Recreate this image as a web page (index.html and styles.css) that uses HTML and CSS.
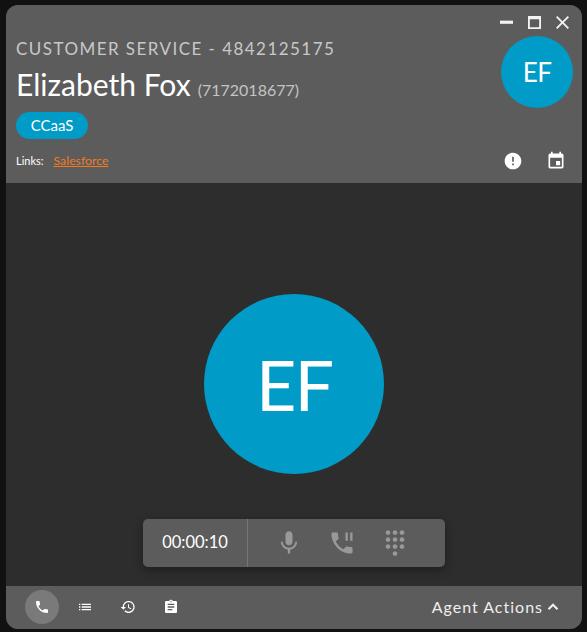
FILE: index.html
```html
<!DOCTYPE html>
<html lang="en">
<head>
    <meta charset="UTF-8">
    <meta name="viewport" content="width=device-width, initial-scale=1.0">
    <title>Call</title>
    <link rel="stylesheet" href="styles.css">
</head>
<body>
    <div class="window">
        <!-- Caller header -->
        <header class="header">
            <div class="info">
                <div class="queue">CUSTOMER SERVICE - 4842125175</div>
                <div class="caller">
                    <span class="caller-name">Elizabeth Fox</span>
                    <span class="caller-number">(7172018677)</span>
                </div>
                <span class="tag">CCaaS</span>
                <div class="links">
                    <span>Links:</span>
                    <a href="#">Salesforce</a>
                </div>
            </div>
            <div class="side">
                <div class="window-controls">
                    <svg class="control" viewBox="0 0 14 14"><rect x="0" y="5" width="14" height="3.4"/></svg>
                    <svg class="control" viewBox="0 0 14 14"><path fill-rule="evenodd" d="M0 0h14v14H0zM2 3.4V12h10V3.4z"/></svg>
                    <svg class="control" viewBox="5 5 14 14"><path d="M19 6.41L17.59 5 12 10.59 6.41 5 5 6.41 10.59 12 5 17.59 6.41 19 12 13.41 17.59 19 19 17.59 13.41 12z"/></svg>
                </div>
                <div class="avatar avatar-small">EF</div>
                <div class="header-actions">
                    <svg class="icon-20" viewBox="0 0 24 24"><path d="M12 2C6.48 2 2 6.48 2 12s4.48 10 10 10 10-4.48 10-10S17.52 2 12 2zm1 15h-2v-2h2v2zm0-4h-2V7h2v6z"/></svg>
                    <svg class="icon-20" viewBox="0 0 24 24"><path d="M17 12h-5v5h5v-5zM16 1v2H8V1H6v2H5c-1.11 0-1.99.9-1.99 2L3 19c0 1.1.89 2 2 2h14c1.1 0 2-.9 2-2V5c0-1.1-.9-2-2-2h-1V1h-2zm3 18H5V8h14v11z"/></svg>
                </div>
            </div>
        </header>

        <!-- Call area -->
        <main class="call">
            <div class="avatar avatar-large">EF</div>
            <div class="call-bar">
                <div class="timer">00:00:10</div>
                <div class="call-controls">
                    <svg class="icon-28" viewBox="0 0 24 24"><path d="M12 14c1.66 0 2.99-1.34 2.99-3L15 5c0-1.66-1.34-3-3-3S9 3.34 9 5v6c0 1.66 1.34 3 3 3zm5.3-3c0 3-2.54 5.1-5.3 5.1S6.7 14 6.7 11H5c0 3.41 2.72 6.23 6 6.72V21h2v-3.28c3.28-.48 6-3.3 6-6.72h-1.7z"/></svg>
                    <svg class="icon-28" viewBox="0 0 24 24"><path d="M17 3h-2v7h2V3zm3 12.5c-1.25 0-2.45-.2-3.57-.57-.35-.11-.74-.03-1.02.24l-2.2 2.2c-2.83-1.44-5.15-3.75-6.59-6.58l2.2-2.21c.28-.27.36-.66.25-1.01C8.7 6.45 8.5 5.25 8.5 4c0-.55-.45-1-1-1H4c-.55 0-1 .45-1 1 0 9.39 7.61 17 17 17 .55 0 1-.45 1-1v-3.5c0-.55-.45-1-1-1zM19 3v7h2V3h-2z"/></svg>
                    <svg class="icon-28" viewBox="0 0 24 24"><path d="M12 19c-1.1 0-2 .9-2 2s.9 2 2 2 2-.9 2-2-.9-2-2-2zM6 1c-1.1 0-2 .9-2 2s.9 2 2 2 2-.9 2-2-.9-2-2-2zm0 6c-1.1 0-2 .9-2 2s.9 2 2 2 2-.9 2-2-.9-2-2-2zm0 6c-1.1 0-2 .9-2 2s.9 2 2 2 2-.9 2-2-.9-2-2-2zm12-8c1.1 0 2-.9 2-2s-.9-2-2-2-2 .9-2 2 .9 2 2 2zm-6 8c-1.1 0-2 .9-2 2s.9 2 2 2 2-.9 2-2-.9-2-2-2zm6 0c-1.1 0-2 .9-2 2s.9 2 2 2 2-.9 2-2-.9-2-2-2zm0-6c-1.1 0-2 .9-2 2s.9 2 2 2 2-.9 2-2-.9-2-2-2zm-6 0c-1.1 0-2 .9-2 2s.9 2 2 2 2-.9 2-2-.9-2-2-2zm0-6c-1.1 0-2 .9-2 2s.9 2 2 2 2-.9 2-2-.9-2-2-2z"/></svg>
                </div>
            </div>
        </main>

        <!-- Bottom tabs -->
        <footer class="footer">
            <nav class="tabs">
                <div class="tab active">
                    <svg class="icon-16" viewBox="0 0 24 24"><path d="M6.62 10.79c1.44 2.83 3.76 5.14 6.59 6.59l2.2-2.2c.27-.27.67-.36 1.02-.24 1.12.37 2.33.57 3.57.57.55 0 1 .45 1 1V20c0 .55-.45 1-1 1-9.39 0-17-7.61-17-17 0-.55.45-1 1-1h3.5c.55 0 1 .45 1 1 0 1.25.2 2.45.57 3.57.11.35.03.74-.25 1.02l-2.2 2.2z"/></svg>
                </div>
                <div class="tab">
                    <svg class="icon-16" viewBox="0 0 24 24"><path d="M3 13h2v-2H3v2zm0 4h2v-2H3v2zm0-8h2V7H3v2zm4 4h14v-2H7v2zm0 4h14v-2H7v2zM7 7v2h14V7H7z"/></svg>
                </div>
                <div class="tab">
                    <svg class="icon-16" viewBox="0 0 24 24"><path d="M13 3c-4.97 0-9 4.03-9 9H1l3.89 3.89.07.14L9 12H6c0-3.87 3.13-7 7-7s7 3.13 7 7-3.13 7-7 7c-1.93 0-3.68-.79-4.94-2.06l-1.42 1.42C8.27 19.99 10.51 21 13 21c4.97 0 9-4.03 9-9s-4.03-9-9-9zm-1 5v5l4.28 2.54.72-1.21-3.5-2.08V8H12z"/></svg>
                </div>
                <div class="tab">
                    <svg class="icon-16" viewBox="0 0 24 24"><path d="M19 3h-4.18C14.4 1.84 13.3 1 12 1c-1.3 0-2.4.84-2.82 2H5c-1.1 0-2 .9-2 2v14c0 1.1.9 2 2 2h14c1.1 0 2-.9 2-2V5c0-1.1-.9-2-2-2zm-7 0c.55 0 1 .45 1 1s-.45 1-1 1-1-.45-1-1 .45-1 1-1zm2 14H7v-2h7v2zm3-4H7v-2h10v2zm0-4H7V7h10v2z"/></svg>
                </div>
            </nav>
            <div class="agent-actions">
                <span>Agent Actions</span>
                <svg class="chevron" viewBox="0 0 24 24"><path d="M12 7l-7 7 2 2 5-5 5 5 2-2z"/></svg>
            </div>
        </footer>
    </div>
</body>
</html>
```

FILE: styles.css
```css
body {
    font-family: 'Lato', sans-serif;
    background-color: #111111;
    margin: 0;
    padding: 5px 5px 3px 6px;
    height: 632px;
    box-sizing: border-box;
    overflow: hidden;
}

svg {
    fill: currentColor;
    display: block;
}

.window {
    height: 624px;
    border-radius: 12px;
    overflow: hidden;
    display: flex;
    flex-direction: column;
    background-color: #2d2d2d;
}

/* Header */
.header {
    height: 178px;
    flex: none;
    background-color: #5c5c5c;
    display: flex;
    justify-content: space-between;
    padding: 0 9px 0 10px;
    box-sizing: border-box;
    color: #fff;
}

.info {
    padding-top: 34px;
}

.queue {
    font-size: 17px;
    line-height: 20px;
    letter-spacing: 1.45px;
    color: #c8c8c8;
}

.caller {
    margin-top: 7px;
    line-height: 36px;
    white-space: nowrap;
}

.caller-name {
    font-size: 30px;
}

.caller-number {
    font-size: 16px;
    color: #c4c4c4;
    margin-left: 3px;
}

.tag {
    display: block;
    width: 72px;
    height: 27px;
    line-height: 26px;
    margin-top: 4px;
    border-radius: 14px;
    background-color: #009bc6;
    text-align: center;
    font-size: 15px;
}

.links {
    margin-top: 14px;
    font-size: 11px;
    line-height: 16px;
    display: flex;
    align-items: baseline;
    gap: 10px;
}

.links a {
    color: #f47a20;
    font-size: 12.3px;
}

.side {
    width: 72px;
    display: flex;
    flex-direction: column;
    align-items: center;
}

.window-controls {
    display: flex;
    align-self: flex-end;
    gap: 15px;
    margin: 11px 4px 0 0;
    color: #f2f2f2;
}

.control {
    width: 13px;
    height: 13px;
}

.avatar {
    border-radius: 50%;
    background-color: #009bc6;
    color: #fff;
    display: flex;
    align-items: center;
    justify-content: center;
    flex: none;
}

.avatar-small {
    width: 72px;
    height: 72px;
    font-size: 26px;
    letter-spacing: -0.5px;
    margin-top: 7px;
}

.header-actions {
    display: flex;
    align-self: flex-end;
    gap: 23px;
    margin: 43px 7px 0 0;
}

.icon-20 {
    width: 20px;
    height: 20px;
}

/* Call area */
.call {
    flex: 1;
    display: flex;
    flex-direction: column;
    align-items: center;
    color: #fff;
    padding-top: 111px;
}

.avatar-large {
    width: 180px;
    height: 180px;
    font-size: 70px;
    letter-spacing: -2px;
}

.call-bar {
    width: 302px;
    height: 48px;
    margin: 45px 0 0 0;
    background-color: #5c5c5c;
    border-radius: 5px;
    box-shadow: 0 3px 10px rgba(0, 0, 0, 0.35);
    display: flex;
}

.timer {
    width: 105px;
    flex: none;
    box-sizing: border-box;
    border-right: 1px solid #777;
    text-align: center;
    line-height: 47px;
    font-size: 16.5px;
}

.call-controls {
    display: flex;
    align-items: center;
    gap: 25px;
    padding-left: 27px;
    color: #999;
}

.icon-28 {
    width: 28px;
    height: 28px;
}

/* Footer */
.footer {
    height: 43px;
    flex: none;
    background-color: #5c5c5c;
    color: #fff;
    display: flex;
    align-items: center;
    justify-content: space-between;
    padding: 0 20px 2px 19px;
    box-sizing: border-box;
}

.tabs {
    display: flex;
    gap: 9px;
}

.tab {
    width: 34px;
    height: 34px;
    border-radius: 50%;
    display: flex;
    align-items: center;
    justify-content: center;
}

.tab.active {
    background-color: #7a7a7a;
}

.icon-16 {
    width: 16px;
    height: 16px;
}

.agent-actions {
    display: flex;
    align-items: center;
    gap: 1px;
    font-size: 16px;
    letter-spacing: 1px;
    color: #eee;
}

.chevron {
    width: 18px;
    height: 18px;
}
```
